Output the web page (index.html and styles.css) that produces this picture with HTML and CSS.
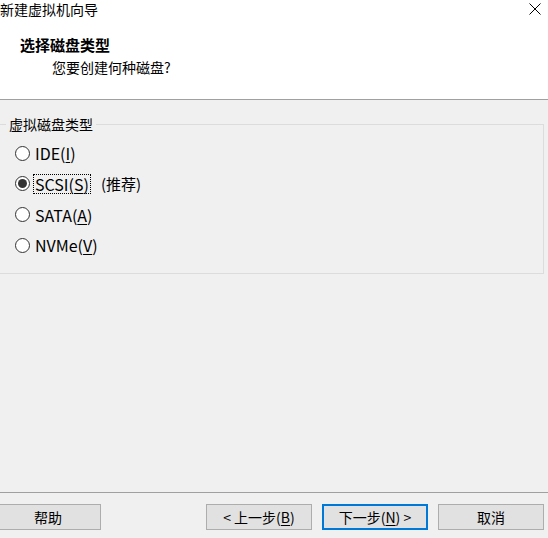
FILE: index.html
```html
<!DOCTYPE html>
<html lang="zh-CN">
<head>
<meta charset="utf-8">
<title>新建虚拟机向导</title>
<link rel="stylesheet" href="styles.css">
</head>
<body>
<div class="window">
  <div class="header">
    <div class="titlebar">
      <span class="title">新建虚拟机向导</span>
      <svg class="close" width="12" height="12" viewBox="0 0 12 12"><path d="M0.5 0.5 L11.5 11.5 M11.5 0.5 L0.5 11.5" stroke="#000" stroke-width="1" fill="none"/></svg>
    </div>
    <div class="heading">选择磁盘类型</div>
    <div class="subtitle">您要创建何种磁盘?</div>
  </div>
  <div class="main">
    <fieldset class="group">
      <legend class="legend">虚拟磁盘类型</legend>
      <div class="options">
        <div class="option"><span class="radio"></span><span class="label">IDE(<u>I</u>)</span></div>
        <div class="option"><span class="radio checked"></span><span class="label focus">SCSI(<u>S</u>)</span><span class="note">(推荐)</span></div>
        <div class="option"><span class="radio"></span><span class="label">SATA(<u>A</u>)</span></div>
        <div class="option"><span class="radio"></span><span class="label">NVMe(<u>V</u>)</span></div>
      </div>
    </fieldset>
  </div>
  <div class="footer">
    <button class="btn help">帮助</button>
    <div class="nav">
      <button class="btn">&lt; 上一步(<u>B</u>)</button>
      <button class="btn default">下一步(<u>N</u>) &gt;</button>
      <button class="btn">取消</button>
    </div>
  </div>
</div>
</body>
</html>
```

FILE: styles.css
```css
* { box-sizing: border-box; }
html, body {
  margin: 0;
  padding: 0;
  background: #f0f0f0;
  overflow: hidden;
}
body {
  font-family: "Noto Sans CJK SC", "Microsoft YaHei", sans-serif;
  font-size: 14px;
  color: #000;
}
.window {
  width: 548px;
  height: 538px;
  display: flex;
  flex-direction: column;
}
.header {
  height: 100px;
  background: #fff;
  border-bottom: 1px solid #a0a0a0;
}
.titlebar {
  display: flex;
  justify-content: space-between;
  align-items: flex-start;
  height: 18px;
  line-height: 18px;
  padding-right: 7px;
}
.close { margin-top: 3px; }
.heading {
  margin-top: 18px;
  margin-left: 20px;
  font-weight: bold;
  font-size: 15px;
  line-height: 18px;
}
.subtitle {
  margin-top: 4px;
  margin-left: 52px;
  line-height: 18px;
}
.main {
  flex: 1;
  padding-top: 16px;
}
.group {
  margin: 0 4px 0 -2px;
  padding: 0;
  border: 1px solid #dcdcdc;
  min-width: 0;
}
.legend {
  margin-left: 7px;
  padding: 0 3px;
  line-height: 16px;
}
.options {
  padding: 6px 0 12px 16px;
}
.option {
  display: flex;
  align-items: center;
  height: 30.67px;
  font-size: 16px;
}
.radio {
  width: 15px;
  height: 15px;
  border: 1px solid #333;
  border-radius: 50%;
  background: #fff;
  display: flex;
  align-items: center;
  justify-content: center;
  margin-right: 3px;
  flex: none;
}
.radio.checked::after {
  content: "";
  width: 9px;
  height: 9px;
  border-radius: 50%;
  background: #333;
}
.label {
  padding: 0 1px;
  line-height: 18px;
  border: 1px dotted transparent;
}
.label.focus { border-color: #000; }
.note { margin-left: 10px; font-size: 15px; }
u { text-underline-offset: 2px; }
.footer {
  height: 46px;
  border-top: 1px solid #a0a0a0;
  padding: 11px 4px 0 0;
  display: flex;
  justify-content: space-between;
  align-items: flex-start;
}
.nav {
  display: flex;
  gap: 10px;
}
.btn {
  width: 106px;
  height: 26px;
  background: #e1e1e1;
  border: 1px solid #adadad;
  font-family: inherit;
  font-size: 14px;
  color: #000;
  padding: 0;
  line-height: 22px;
}
.help { margin-left: -5px; }
.btn.default { border: 2px solid #0078d7; }
```
